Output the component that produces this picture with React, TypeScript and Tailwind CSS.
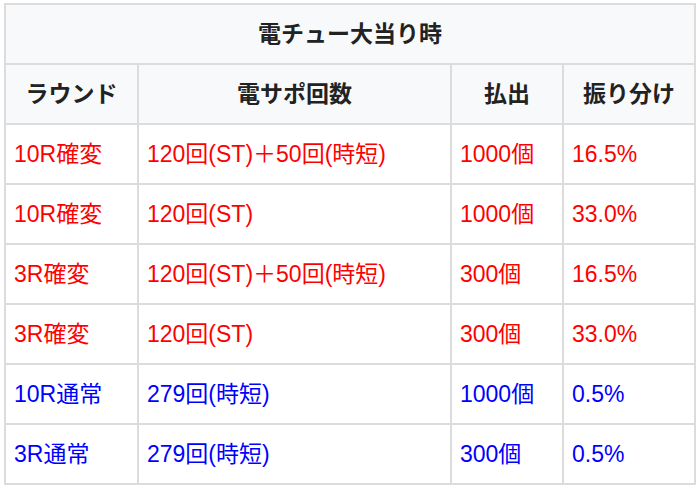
import React from "react";

type Row = { r: string; s: string; p: string; f: string; c: "red" | "blue" };

const rows: Row[] = [
  { r: "10R確変", s: "120回(ST)＋50回(時短)", p: "1000個", f: "16.5%", c: "red" },
  { r: "10R確変", s: "120回(ST)", p: "1000個", f: "33.0%", c: "red" },
  { r: "3R確変", s: "120回(ST)＋50回(時短)", p: "300個", f: "16.5%", c: "red" },
  { r: "3R確変", s: "120回(ST)", p: "300個", f: "33.0%", c: "red" },
  { r: "10R通常", s: "279回(時短)", p: "1000個", f: "0.5%", c: "blue" },
  { r: "3R通常", s: "279回(時短)", p: "300個", f: "0.5%", c: "blue" },
];

export default function App() {
  return (
    <div
      className="w-[700px] h-[491px] bg-white pl-[4px] pt-[3px]"
      style={{ fontFamily: '"Liberation Sans", "Noto Sans CJK JP", sans-serif' }}
    >
      <div className="grid w-[692px] grid-cols-[131px_311px_110px_130px] auto-rows-[58px] gap-[2px] border-2 border-[#dcdcdc] bg-[#dcdcdc]">
        <div className="col-span-4 flex items-center justify-center bg-[#f8f9fa] text-[23px] font-bold text-[#222]">
          電チュー大当り時
        </div>
        {["ラウンド", "電サポ回数", "払出", "振り分け"].map((h) => (
          <div
            key={h}
            className="flex items-center justify-center bg-[#f8f9fa] text-[23px] font-bold text-[#222]"
          >
            {h}
          </div>
        ))}
        {rows.map((row, i) => {
          const color = row.c === "red" ? "text-[#ff0000]" : "text-[#0000ff]";
          return (
            <React.Fragment key={i}>
              {[row.r, row.s, row.p, row.f].map((t, j) => (
                <div
                  key={j}
                  className={`flex items-center bg-white pl-[8px] text-[23px] ${color}`}
                >
                  {t}
                </div>
              ))}
            </React.Fragment>
          );
        })}
      </div>
    </div>
  );
}
